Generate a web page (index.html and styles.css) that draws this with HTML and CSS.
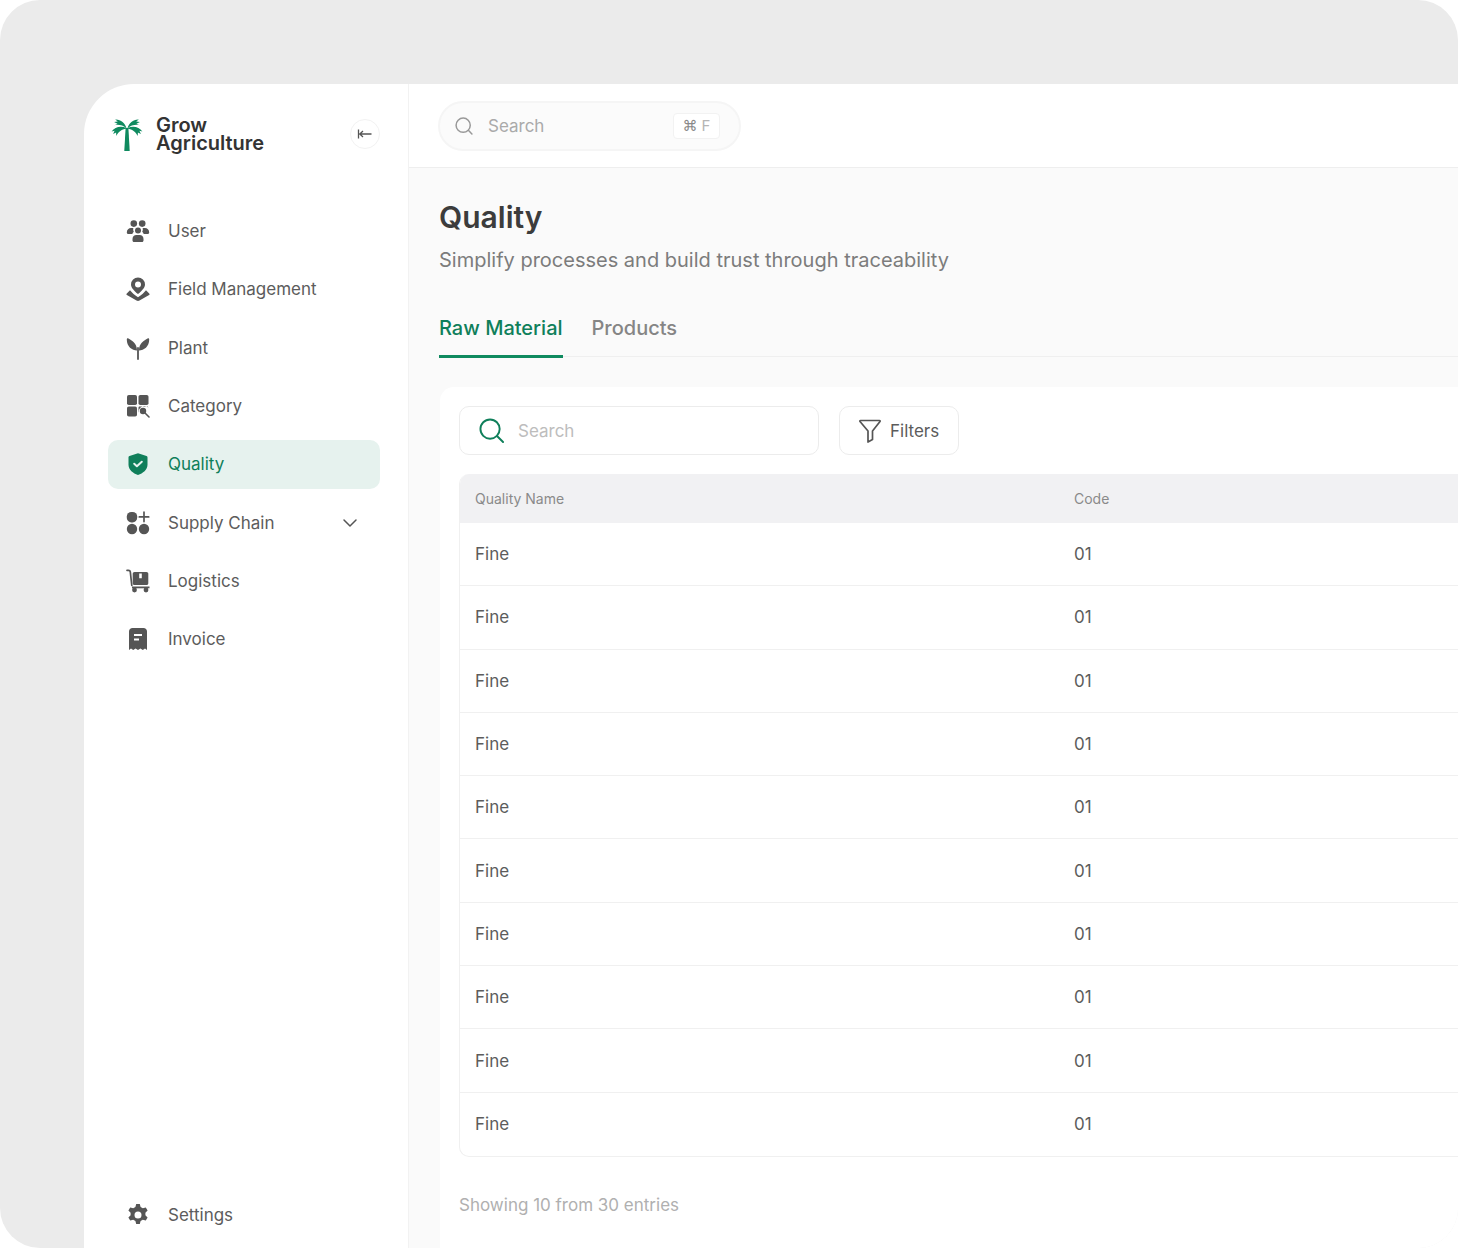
FILE: index.html
```html
<!DOCTYPE html>
<html lang="en">
	<head>
		<meta charset="UTF-8" />
		<meta name="viewport" content="width=device-width, initial-scale=1.0" />
		<title>Grow Agriculture - Quality</title>
		<link rel="stylesheet" href="styles.css">
	</head>
	<body>
		<div class="frame">
			<div class="app">
				<aside class="sidebar">
					<div class="brand">
						<svg class="brand_logo" viewBox="0 0 32 33" fill="#0f8a5f">
							<path d="M14.6 10h2.8l1.3 23h-5.4z" />
							<path d="M15.6 10.4C14 5 9.500 1.200 4.200 1.600l2.600 2-3.700.4 3.400 1.700-3.200 1.500c4-.9 8.600-.100 12.300 3.200z" />
							<path d="M15.400 10C10 7.500 3.800 8.800.6 13.400l3-.6-1.500 3.300 3-1.700.2 3.600c1.500-3.500 5-6.800 10.300-7.600z" />
							<path d="M16.400 10.400C18 5 22.500 1.200 27.800 1.600l-2.600 2 3.700.4-3.400 1.700 3.200 1.500c-4-.9-8.600-.100-12.300 3.200z" />
							<path d="M16.600 10c5.400-2.500 11.600-1.200 14.800 3.400l-3-.6 1.500 3.300-3-1.700-.2 3.600c-1.500-3.500-5-6.800-10.300-7.600z" />
						</svg>
						<div class="brand_name">Grow<br />Agriculture</div>
						<button class="collapse_btn">
							<svg viewBox="0 0 16 16" fill="none" stroke="#555" stroke-width="1.300">
								<path d="M1.500 3.500v9M14.500 8H2.500M6 5 2.800 8 6 11" />
							</svg>
						</button>
					</div>

					<nav class="nav">
						<a class="nav_item">
							<svg class="nav_icon" viewBox="0 0 24 24" fill="#555">
								<circle cx="7.800" cy="4.600" r="3.300" />
								<circle cx="16.200" cy="4.600" r="3.300" />
								<circle cx="12" cy="11.400" r="3" />
								<path d="M.8 13.500c0-2.800 2-4.500 4.200-4.500h2.300a5 5 0 0 0 .5 3.800c-.7.700-1.200 1.300-1.500 2.200H2.300c-.9 0-1.500-.6-1.500-1.500zM23.200 13.500c0-2.800-2-4.500-4.200-4.500h-2.300a5 5 0 0 1-.5 3.800c.7.700 1.200 1.300 1.500 2.200h3.900c.9 0 1.600-.6 1.600-1.500z" />
								<path d="M6.500 20c0-2.500 1.700-4 3.800-4h3.400c2.100 0 3.800 1.500 3.800 4v1.500c0 .9-.6 1.500-1.500 1.500H8c-.9 0-1.500-.6-1.500-1.500z" />
							</svg>
							<span>User</span>
						</a>
						<a class="nav_item">
							<svg class="nav_icon" viewBox="0 0 24 24" fill="#555">
								<path fill-rule="evenodd" d="M12 .5a7 7 0 0 1 7 7c0 3.200-3.300 6.600-7 9.500-3.700-2.900-7-6.300-7-9.500a7 7 0 0 1 7-7zm0 4a3 3 0 1 0 0 6 3 3 0 0 0 0-6z" />
								<path d="M4 13.200c1.500 1.900 4.500 4.800 8 7 3.500-2.200 6.500-5.100 8-7l3.200 3.200c.6.600.5 1.300-.1 1.700L13.500 23.500c-1 .6-2 .6-3 0L.9 18.100c-.6-.4-.7-1.100-.1-1.700z" />
							</svg>
							<span>Field Management</span>
						</a>
						<a class="nav_item">
							<svg class="nav_icon" viewBox="0 0 24 24" fill="#555">
								<path d="M11 14.500C6 14.500.8 10.500.8 3.500c0-1 .8-1.500 1.600-1 3.500 2 8.600 4.500 8.600 12z" />
								<path d="M13 14.500c5 0 10.200-4 10.200-11 0-1-.8-1.500-1.600-1-3.500 2-8.600 4.500-8.600 12z" />
								<rect x="11.100" y="11" width="1.800" height="13" rx=".9" />
							</svg>
							<span>Plant</span>
						</a>
						<a class="nav_item">
							<svg class="nav_icon" viewBox="0 0 24 24" fill="#555">
								<rect x="1" y="1" width="10" height="10" rx="1.800" />
								<rect x="12.500" y="1" width="10" height="10" rx="1.800" />
								<rect x="1" y="12.500" width="10" height="10" rx="1.800" />
								<path d="M13.500 12.500h7.500c.7 0 1.300.5 1.400 1.100a5.700 5.700 0 0 0-9.600 4.900c-.3-.3-.3-.6-.3-1v-3.500c0-.8.200-1.500 1-1.500z" />
								<circle cx="17" cy="17" r="3.200" />
								<path d="M19.500 19.500 23 23" stroke="#555" stroke-width="1.600" stroke-linecap="round" />
							</svg>
							<span>Category</span>
						</a>
						<a class="nav_item nav_item_active">
							<svg class="nav_icon" viewBox="0 0 24 24">
								<path fill="#0f7f5a" d="M12 1.200 20.500 4c.7.200 1 .8 1 1.500v7.200c0 5-4.600 8.600-9.500 10.300-4.900-1.700-9.500-5.300-9.500-10.300V5.500c0-.7.300-1.300 1-1.500z" />
								<path fill="none" stroke="#e6f2ee" stroke-width="2" stroke-linecap="round" stroke-linejoin="round" d="m8.200 11.800 2.700 2.500 4.900-4.600" />
							</svg>
							<span>Quality</span>
						</a>
						<a class="nav_item">
							<svg class="nav_icon" viewBox="0 0 24 24" fill="#555">
								<rect x=".8" y="1" width="10.400" height="10.400" rx="4.600" />
								<circle cx="6" cy="18" r="5.200" />
								<circle cx="18" cy="18" r="5.200" />
								<path d="M18 1.200v9.400M13.300 5.900h9.400" stroke="#555" stroke-width="1.700" stroke-linecap="round" />
							</svg>
							<span>Supply Chain</span>
							<svg class="nav_chevron" viewBox="0 0 16 16" fill="none" stroke="#555" stroke-width="1.500" stroke-linecap="round" stroke-linejoin="round">
								<path d="m2 5 6 6 6-6" />
							</svg>
						</a>
						<a class="nav_item">
							<svg class="nav_icon" viewBox="0 0 24 24" fill="#555">
								<path d="M1 1.300h1.500c1 0 1.700.6 1.800 1.500l1.500 13.700" fill="none" stroke="#555" stroke-width="1.700" stroke-linecap="round" />
								<path fill-rule="evenodd" d="M8.500 3h12c1 0 1.800.8 1.800 1.800v9.400c0 1-.8 1.800-1.800 1.800h-12c-1 0-1.800-.8-1.800-1.800V4.800C6.700 3.800 7.500 3 8.500 3zm4.700 1.500v4.800h2.600V4.500z" />
								<path d="M6 17.500h17.500v1.800H6z" />
								<circle cx="8.500" cy="21" r="2.400" />
								<circle cx="20" cy="21" r="2.400" />
							</svg>
							<span>Logistics</span>
						</a>
						<a class="nav_item">
							<svg class="nav_icon" viewBox="0 0 24 24" fill="#555">
								<path fill-rule="evenodd" d="M6.500 1h11C19.500 1 21 2.500 21 4.500V23l-2-1.500-2.200 1.500-2.400-1.500-2.400 1.500-2.400-1.500L7.200 23 5 21.500 3 23V4.500C3 2.500 4.500 1 6.500 1zM8 7v2h8V7zm0 4.500v2h5v-2z" />
							</svg>
							<span>Invoice</span>
						</a>
					</nav>

					<a class="nav_item nav_settings">
						<svg class="nav_icon" viewBox="0 0 24 24" fill="#555">
							<path fill-rule="evenodd" d="M10.200 1h3.600l.8 3 2.200 1.200 3-.8 1.800 3.100-2.200 2.200v2.600l2.200 2.200-1.800 3.100-3-.8-2.200 1.200-.8 3h-3.600l-.8-3-2.200-1.200-3 .8-1.800-3.100 2.200-2.200v-2.600L2.400 7.500l1.800-3.100 3 .8 2.200-1.200zM12 8.500a3.500 3.500 0 1 0 0 7 3.500 3.500 0 0 0 0-7z" />
						</svg>
						<span>Settings</span>
					</a>
				</aside>

				<main class="main">
					<header class="topbar">
						<div class="top_search">
							<svg class="top_search_icon" viewBox="0 0 24 24" fill="none" stroke="#999" stroke-width="1.800" stroke-linecap="round">
								<circle cx="11" cy="11" r="8.500" />
								<path d="m17.500 17.500 4 4" />
							</svg>
							<span class="top_search_text">Search</span>
							<span class="kbd"><b>⌘</b> F</span>
						</div>
					</header>

					<section class="content">
						<h1 class="title">Quality</h1>
						<p class="subtitle">Simplify processes and build trust through traceability</p>

						<div class="tabs">
							<a class="tab tab_active">Raw Material</a>
							<a class="tab">Products</a>
						</div>

						<div class="card">
							<div class="toolbar">
								<div class="search_box">
									<svg class="search_box_icon" viewBox="0 0 26 26" fill="none" stroke="#0f7f5a" stroke-width="2" stroke-linecap="round">
										<circle cx="11.500" cy="11.500" r="10" />
										<path d="m19 19 6 6" />
									</svg>
									<span>Search</span>
								</div>
								<button class="filter_btn">
									<svg viewBox="0 0 22 24" fill="none" stroke="#555" stroke-width="1.700" stroke-linejoin="round">
										<path d="M1.500 1.500h19c.6 0 .8.500.5 1L13.500 12v8.500l-4.500 2.500V12L1 2.500c-.3-.5-.1-1 .5-1z" />
									</svg>
									Filters
								</button>
							</div>

							<div class="table">
								<div class="table_head">
									<div>Quality Name</div>
									<div>Code</div>
								</div>
								<div class="table_row"><div>Fine</div><div>01</div></div>
								<div class="table_row"><div>Fine</div><div>01</div></div>
								<div class="table_row"><div>Fine</div><div>01</div></div>
								<div class="table_row"><div>Fine</div><div>01</div></div>
								<div class="table_row"><div>Fine</div><div>01</div></div>
								<div class="table_row"><div>Fine</div><div>01</div></div>
								<div class="table_row"><div>Fine</div><div>01</div></div>
								<div class="table_row"><div>Fine</div><div>01</div></div>
								<div class="table_row"><div>Fine</div><div>01</div></div>
								<div class="table_row"><div>Fine</div><div>01</div></div>
							</div>

							<p class="entries">Showing 10 from 30 entries</p>
						</div>
					</section>
				</main>
			</div>
		</div>
	</body>
</html>
```

FILE: styles.css
```css
* {
	padding: 0;
	margin: 0;
	border: 0;
	box-sizing: border-box;
}

html,
body {
	width: 100%;
	height: 100%;
	background-color: #fff;
	overflow: hidden;
}

body {
	font-family: "Inter", "Roboto", sans-serif;
	color: #555;
}

.frame {
	width: 1458px;
	height: 1248px;
	padding: 84px 0 0 84px;
	background-color: #ebebeb;
	border-radius: 40px;
	overflow: hidden;
}

.app {
	display: flex;
	width: 1620px;
	height: 1164px;
	background-color: #fff;
	border-top-left-radius: 50px;
	overflow: hidden;
}

/* sidebar */
.sidebar {
	display: flex;
	flex-direction: column;
	flex-shrink: 0;
	width: 325px;
	padding: 25px 28px 8.500px 24px;
	border-right: 1px solid #f2f2f2;
}

.brand {
	display: flex;
	align-items: center;
	height: 50px;
}

.brand_logo {
	width: 32px;
	height: 33px;
	margin-left: 3px;
}

.brand_name {
	margin-left: 13px;
	font-size: 20px;
	font-weight: 600;
	line-height: 18px;
	color: #333;
}

.collapse_btn {
	display: flex;
	justify-content: center;
	align-items: center;
	width: 30px;
	height: 30px;
	margin-left: auto;
	background-color: #fff;
	border: 1px solid #f2f2f2;
	border-radius: 50%;
}

.collapse_btn > svg {
	width: 16px;
	height: 16px;
}

.nav {
	display: flex;
	flex-direction: column;
	gap: 9.330px;
	margin-top: 47.500px;
}

.nav_item {
	display: flex;
	align-items: center;
	gap: 18px;
	height: 49px;
	padding: 0 22px 0 18px;
	border-radius: 10px;
	font-size: 17px;
	color: #5c5c5c;
}

.nav_item_active {
	background-color: #e6f2ee;
	color: #0f7f5a;
}

.nav_icon {
	flex-shrink: 0;
	width: 24px;
	height: 24px;
}

.nav_chevron {
	width: 16px;
	height: 16px;
	margin-left: auto;
}

.nav_settings {
	margin-top: auto;
}

/* main */
.main {
	flex: 1;
	display: flex;
	flex-direction: column;
	min-width: 0;
}

.topbar {
	flex-shrink: 0;
	display: flex;
	align-items: center;
	height: 84px;
	padding-left: 29px;
	border-bottom: 1px solid #eee;
}

.top_search {
	display: flex;
	align-items: center;
	width: 303px;
	height: 50px;
	padding: 0 19px 0 14px;
	background-color: #fbfbfb;
	border: 2px solid #f5f5f5;
	border-radius: 25px;
}

.top_search_icon {
	width: 20px;
	height: 20px;
}

.top_search_text {
	margin-left: 14px;
	font-size: 17px;
	color: #aaa;
}

.kbd {
	display: flex;
	align-items: center;
	justify-content: center;
	gap: 4px;
	width: 47px;
	height: 26px;
	margin-left: auto;
	background-color: #fff;
	border: 1px solid #f2f2f2;
	border-radius: 4px;
	font-size: 15px;
	color: #b5b5b5;
}

.kbd > b {
	font-family: "DejaVu Sans", sans-serif;
	font-weight: 400;
	color: #888;
}

.content {
	flex: 1;
	padding: 31px 0 0 30px;
	background-color: #fafafa;
}

.title {
	font-size: 30px;
	font-weight: 600;
	line-height: 36px;
	color: #3c3c3c;
}

.subtitle {
	margin-top: 12px;
	font-size: 20px;
	line-height: 26px;
	color: #7c7c7c;
}

.tabs {
	display: flex;
	gap: 29px;
	margin-top: 43px;
	border-bottom: 1px solid #efefef;
}

.tab {
	margin-bottom: -2px;
	padding-bottom: 15px;
	border-bottom: 3px solid transparent;
	font-size: 20px;
	font-weight: 500;
	line-height: 24px;
	color: #858585;
}

.tab_active {
	border-bottom-color: #0f8a5f;
	color: #0f7f5a;
}

.card {
	height: 900px;
	margin: 30px 0 0 1px;
	padding: 19px;
	background-color: #fff;
	border-top-left-radius: 14px;
}

.toolbar {
	display: flex;
	gap: 20px;
}

.search_box {
	display: flex;
	align-items: center;
	gap: 14px;
	width: 360px;
	height: 49px;
	padding-left: 19px;
	border: 1.500px solid #ececec;
	border-radius: 10px;
	font-size: 17px;
	color: #bdbdbd;
}

.search_box_icon {
	width: 25px;
	height: 25px;
}

.filter_btn {
	display: flex;
	align-items: center;
	gap: 9px;
	width: 120px;
	height: 49px;
	padding-left: 19px;
	background-color: #fff;
	border: 1.500px solid #ececec;
	border-radius: 10px;
	font-family: inherit;
	font-size: 17px;
	color: #5c5c5c;
}

.filter_btn > svg {
	width: 22px;
	height: 24px;
}

.table {
	margin-top: 19px;
	border-left: 1px solid #f0f0f0;
	border-bottom: 1px solid #f0f0f0;
	border-radius: 10px 0 0 10px;
	overflow: hidden;
}

.table_head,
.table_row {
	display: grid;
	grid-template-columns: 599px 1fr;
	align-items: center;
	padding-left: 15px;
}

.table_head {
	height: 49px;
	background-color: #f1f1f3;
	font-size: 14px;
	color: #8a8a8a;
}

.table_row {
	height: 63.300px;
	border-bottom: 1px solid #f0f0f0;
	font-size: 17px;
	color: #5c5c5c;
}

.table_row:last-child {
	border-bottom: 0;
}

.entries {
	margin-top: 36px;
	font-size: 17px;
	line-height: 24px;
	color: #b0b0b0;
}
```
